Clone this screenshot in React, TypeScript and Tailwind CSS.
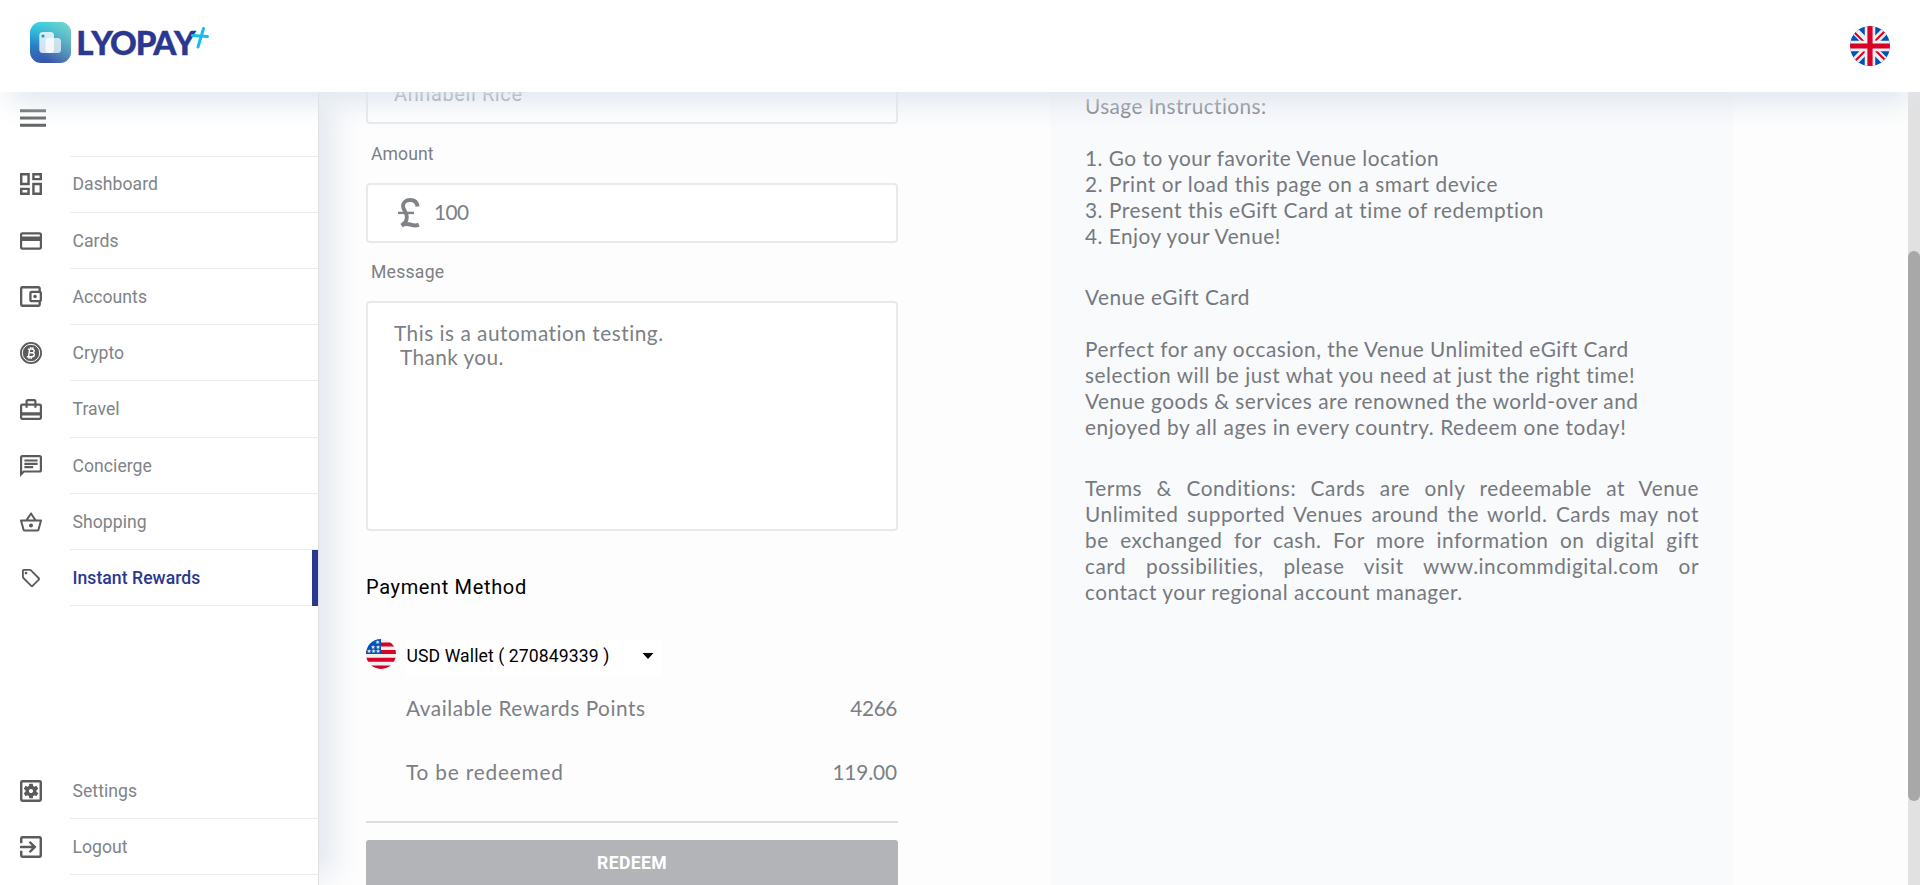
import type { ReactNode } from "react";
import {
  MdOutlineDashboard,
  MdCreditCard,
  MdOutlineAccountBalanceWallet,
  MdCardTravel,
  MdOutlineChat,
  MdOutlineShoppingBasket,
  MdOutlineLocalOffer,
  MdOutlineSettingsApplications,
  MdExitToApp,
} from "react-icons/md";

function Logo() {
  return (
    <svg width="184" height="48" viewBox="0 0 184 48" className="block">
      <defs>
        <linearGradient id="lg1" x1="0.1" y1="0" x2="0.35" y2="1">
          <stop offset="0" stopColor="#13cdf3" />
          <stop offset="0.55" stopColor="#2b7cc4" />
          <stop offset="1" stopColor="#3a53a8" />
        </linearGradient>
        <linearGradient id="lg2" x1="1" y1="0" x2="0.2" y2="0.7">
          <stop offset="0" stopColor="#7cdcc9" stopOpacity="0.95" />
          <stop offset="1" stopColor="#7cdcc9" stopOpacity="0" />
        </linearGradient>
      </defs>
      <rect x="0" y="2" width="41" height="41" rx="11" fill="url(#lg1)" />
      <rect x="0" y="2" width="41" height="41" rx="11" fill="url(#lg2)" />
      <rect x="9.3" y="12" width="14.7" height="21" rx="3.5" fill="#fff" fillOpacity="0.78" />
      <circle cx="13" cy="16" r="1.6" fill="#2a8fd0" />
      <rect x="15.5" y="18" width="15.5" height="15" rx="3.5" fill="#fff" fillOpacity="0.7" />
      <text
        x="46.2 61.2 80 105.8 123.2 144"
        y="34.7"
        fill="#2b3890"
        stroke="#2b3890"
        strokeWidth="0.4"
        className="font-['Lato',sans-serif] text-[33px] font-black"
      >
        LYOPAY
      </text>
      <g stroke="#12bfee" strokeWidth="3" strokeLinecap="round">
        <path d="M162.500 15.500L177.500 16.500" />
        <path d="M173.500 8.500L168 27" />
      </g>
    </svg>
  );
}

function UkFlag() {
  return (
    <svg width="40" height="40" viewBox="0 0 40 40" className="block">
      <clipPath id="uk">
        <circle cx="20" cy="20" r="20" />
      </clipPath>
      <g clipPath="url(#uk)">
        <rect width="40" height="40" fill="#0052b4" />
        <path d="M0 0L40 40M40 0L0 40" stroke="#f0f0f0" strokeWidth="7.500" />
        <path d="M4.500 6.500L20 22M35 5L20 20M5.500 34.500L20 20M34.500 33.500L20 19" stroke="#d80027" strokeWidth="2" />
        <path d="M20 0V40M0 20H40" stroke="#f0f0f0" strokeWidth="10.500" />
        <path d="M20 0V40M0 20H40" stroke="#d80027" strokeWidth="5.200" />
      </g>
    </svg>
  );
}

function UsFlag() {
  return (
    <svg width="30" height="30" viewBox="0 0 30 30" className="block">
      <clipPath id="us">
        <circle cx="15" cy="15" r="15" />
      </clipPath>
      <g clipPath="url(#us)">
        <rect width="30" height="30" fill="#f0f0f0" />
        <path d="M0 5.500H30M0 13H30M0 20.800H30M0 28.500H30" stroke="#d80027" strokeWidth="4" />
        <rect width="15" height="15" fill="#0052b4" />
        <g fill="#f0f0f0" fontSize="5.500" className="font-['DejaVu_Sans',sans-serif]">
          <text x="9" y="4.500">★</text>
          <text x="4.500" y="9.500">★</text>
          <text x="9.500" y="9.500">★</text>
          <text x="0.500" y="14">★</text>
          <text x="5" y="14">★</text>
          <text x="9.500" y="14">★</text>
        </g>
      </g>
    </svg>
  );
}

function CryptoIcon() {
  return (
    <svg width="22" height="22" viewBox="0 0 22 22">
      <circle cx="11" cy="11" r="11" fill="#5b5b5b" />
      <circle cx="11" cy="11" r="8.700" fill="none" stroke="#fff" strokeWidth="1" />
      <path
        d="M9.700 6.500L8.500 15M7.800 7.100h4c3.400 0 3 3.700 0 3.700H9.300h2.700c3.500 0 2.900 4 -.6 4H6.800M10.900 5l-.3 2M13 5.300l-.2 1.900M9.200 14.800l-.3 2M11.400 14.800l-.3 2"
        fill="none"
        stroke="#fff"
        strokeWidth="1.400"
      />
    </svg>
  );
}

function PoundIcon() {
  return (
    <svg width="22" height="30" viewBox="0 0 22 30" fill="none" stroke="#808388">
      <path d="M19.500 8.500C19 4.200 16.500 2 12.300 2C8 2 5 4.500 5 8C5 11.500 8.800 14.500 8.800 19C8.800 22.500 7.500 25 4.500 26.500" strokeWidth="3.900" />
      <path d="M3.500 27.500C7.500 24.700 10.500 25.900 13.500 26.900C16.300 27.800 18.500 27.700 20.800 26.700" strokeWidth="4" />
      <path d="M0 14.900H16" strokeWidth="2.400" />
    </svg>
  );
}

type Item = { label: string; icon: ReactNode; active?: boolean; tall?: boolean; first?: boolean };

const main: Item[] = [
  { label: "Dashboard", icon: <MdOutlineDashboard viewBox="3 3 18 18" className="h-[22px] w-[22px]" />, first: true },
  { label: "Cards", icon: <MdCreditCard viewBox="2 4 20 16" className="h-[18px] w-[22px]" /> },
  { label: "Accounts", icon: <MdOutlineAccountBalanceWallet viewBox="3 3 19 18" className="h-[21px] w-[22px]" /> },
  { label: "Crypto", icon: <CryptoIcon /> },
  { label: "Travel", icon: <MdCardTravel viewBox="2 2 20 19" className="h-[21px] w-[22px]" />, tall: true },
  { label: "Concierge", icon: <MdOutlineChat viewBox="2 2 20 20" className="h-[22px] w-[22px]" /> },
  { label: "Shopping", icon: <MdOutlineShoppingBasket viewBox="1 2 22 19" className="h-[20px] w-[22px]" /> },
  { label: "Instant Rewards", icon: <MdOutlineLocalOffer viewBox="2 2 20 20" className="ml-[2px] h-[18px] w-[18px]" />, active: true },
];

const footer: Item[] = [
  { label: "Settings", icon: <MdOutlineSettingsApplications viewBox="3 3 18 18" className="h-[22px] w-[22px]" /> },
  { label: "Logout", icon: <MdExitToApp viewBox="3 3 18 18" className="h-[22px] w-[22px]" /> },
];

function NavRow({ item }: { item: Item }) {
  return (
    <li className={`flex shrink-0 ${item.tall ? "h-[57px]" : "h-14"}`}>
      <div className={`flex w-[70px] items-center pl-5 text-[#5b5b5b] ${item.first ? "pb-0.5" : "pb-px"}`}>{item.icon}</div>
      <div
        className={`flex flex-1 items-center border-b border-[#ececee] pl-[2.5px] text-[17.6px] tracking-[0.04px] ${
          item.first ? "pb-px" : "pt-px"
        } ${item.active ? "font-medium text-[#2b3890]" : "text-[#808388]"}`}
      >
        {item.label}
      </div>
      {item.active && <div className="w-1.5 bg-[#2b3890]" />}
    </li>
  );
}

function Sidebar() {
  return (
    <aside className="relative z-10 flex w-[319px] shrink-0 flex-col border-r border-[#dcdfe3] bg-white pb-2.5 shadow-[22px_0_30px_-10px_#dfe6ee]">
      <div className="flex h-[65px] shrink-0">
        <div className="w-[70px] pl-5 pt-[17px]">
          <svg width="26" height="18" viewBox="0 0 26 18" fill="#5f5f5f">
            <path d="M0 0.300H26V3.300H0zM0 7.500H26V10.500H0zM0 14.700H26V17.700H0z" />
          </svg>
        </div>
        <div className="flex-1 border-b border-[#ececee]" />
      </div>
      <ul>
        {main.map((i) => (
          <NavRow key={i.label} item={i} />
        ))}
      </ul>
      <ul className="mt-auto">
        {footer.map((i) => (
          <NavRow key={i.label} item={i} />
        ))}
      </ul>
    </aside>
  );
}

function Form() {
  return (
    <section className="-mt-7 ml-[47px] flex w-[532px] shrink-0 flex-col text-[#7c7f84]">
      <div className="flex h-[60px] shrink-0 items-center rounded-sm border-2 border-[#e8e9ea] bg-white pl-[26px] text-xl tracking-[0.6px]">
        Annabell Rice
      </div>
      <div className="flex h-[59px] shrink-0 items-center pl-[5px] pt-0.5 text-[17.6px] tracking-[0.1px]">Amount</div>
      <div className="flex h-[60px] shrink-0 items-center rounded-sm border-2 border-[#e8e9ea] bg-white pl-[30px]">
        <PoundIcon />
        <span className="ml-3.5 pb-[3px] font-['Lato',sans-serif] text-[20.8px] tracking-[-0.5px]">100</span>
      </div>
      <div className="flex h-[58px] shrink-0 items-center pl-[5px] text-[17.6px] tracking-[0.25px]">Message</div>
      <div className="h-[230px] shrink-0 whitespace-pre rounded-sm border-2 border-[#e8e9ea] bg-white pl-[26px] pt-[18px] font-['Lato',sans-serif] text-[20.8px] leading-6">
        <div className="tracking-[0.51px]">This is a automation testing.</div>
        <div className="pl-px tracking-[0.4px]"> Thank you.</div>
      </div>
      <h2 className="flex h-[108px] shrink-0 items-center pt-1 text-xl tracking-[0.65px] text-black">Payment Method</h2>
      <div className="flex h-[37px] shrink-0">
        <UsFlag />
        <div className="ml-2.5 flex w-[255px] items-center bg-white pb-[3px] pl-[0.5px] text-[17.6px] tracking-[0.1px] text-black">
          <span>USD Wallet ( 270849339 )</span>
          <svg width="12" height="6" viewBox="0 0 12 6" className="ml-auto mr-[7px]">
            <path d="M0.500 0H11.500L6 6z" fill="#000" />
          </svg>
        </div>
      </div>
      <div className="flex h-[62px] shrink-0 items-center justify-between pl-10 pr-px pt-px font-['Lato',sans-serif] text-[20.8px]">
        <span className="tracking-[0.53px]">Available Rewards Points</span>
        <span className="tracking-[-0.4px]">4266</span>
      </div>
      <div className="flex h-[66px] shrink-0 items-center justify-between pl-10 pr-px pt-px font-['Lato',sans-serif] text-[20.8px]">
        <span className="tracking-[0.82px]">To be redeemed</span>
        <span className="tracking-[-0.1px]">119.00</span>
      </div>
      <div className="mt-[17px] h-0.5 shrink-0 bg-[#dddddf]" />
      <button className="mt-[17px] h-[46px] shrink-0 rounded-t-[3px] bg-[#b3b4b8] pt-px text-[17.6px] font-bold tracking-[0.35px] text-white">
        REDEEM
      </button>
    </section>
  );
}

function Details() {
  return (
    <section className="ml-[152px] w-[683px] shrink-0 bg-[#f9fafc] pl-[35px] pt-px font-['Lato',sans-serif] text-[20.8px] leading-[26px] text-[#75797e]">
      <p className="tracking-[0.4px]">Usage Instructions:</p>
      <div className="mt-[26px]">
        <p className="tracking-[0.5px]">1. Go to your favorite Venue location</p>
        <p className="tracking-[0.59px]">2. Print or load this page on a smart device</p>
        <p className="tracking-[0.55px]">3. Present this eGift Card at time of redemption</p>
        <p className="tracking-[0.5px]">4. Enjoy your Venue!</p>
      </div>
      <p className="mt-[35px] tracking-[0.49px]">Venue eGift Card</p>
      <div className="mt-[26px]">
        <p className="tracking-[0.52px]">Perfect for any occasion, the Venue Unlimited eGift Card</p>
        <p className="tracking-[0.51px]">selection will be just what you need at just the right time!</p>
        <p className="tracking-[0.5px]">Venue goods &amp; services are renowned the world-over and</p>
        <p className="tracking-[0.58px]">enjoyed by all ages in every country. Redeem one today!</p>
      </div>
      <p className="mt-[35px] w-[614px] tracking-[0.54px]">
        <span className="block [text-align-last:justify]">Terms &amp; Conditions: Cards are only redeemable at Venue</span>
        <span className="block [text-align-last:justify]">Unlimited supported Venues around the world. Cards may not</span>
        <span className="block [text-align-last:justify]">be exchanged for cash. For more information on digital gift</span>
        <span className="block [text-align-last:justify]">card possibilities, please visit www.incommdigital.com or</span>
        <span className="block">contact your regional account manager.</span>
      </p>
    </section>
  );
}

export default function App() {
  return (
    <div className="flex h-[885px] w-[1920px] flex-col overflow-hidden bg-[#fdfdfd] font-['Roboto',sans-serif]">
      <header className="relative z-20 flex h-[92px] shrink-0 justify-between bg-white pl-[30px] pr-[30px] pt-5 shadow-[0_20px_30px_-10px_#dfe6ee]">
        <Logo />
        <div className="pt-1.5">
          <UkFlag />
        </div>
      </header>
      <div className="flex min-h-0 flex-1">
        <Sidebar />
        <main className="flex min-w-0 flex-1 overflow-hidden">
          <Form />
          <Details />
        </main>
        <div className="w-3 shrink-0 bg-[#e1e1e1] pt-[159px]">
          <div className="h-[550px] rounded-full bg-[#a8a8a8]" />
        </div>
      </div>
    </div>
  );
}
